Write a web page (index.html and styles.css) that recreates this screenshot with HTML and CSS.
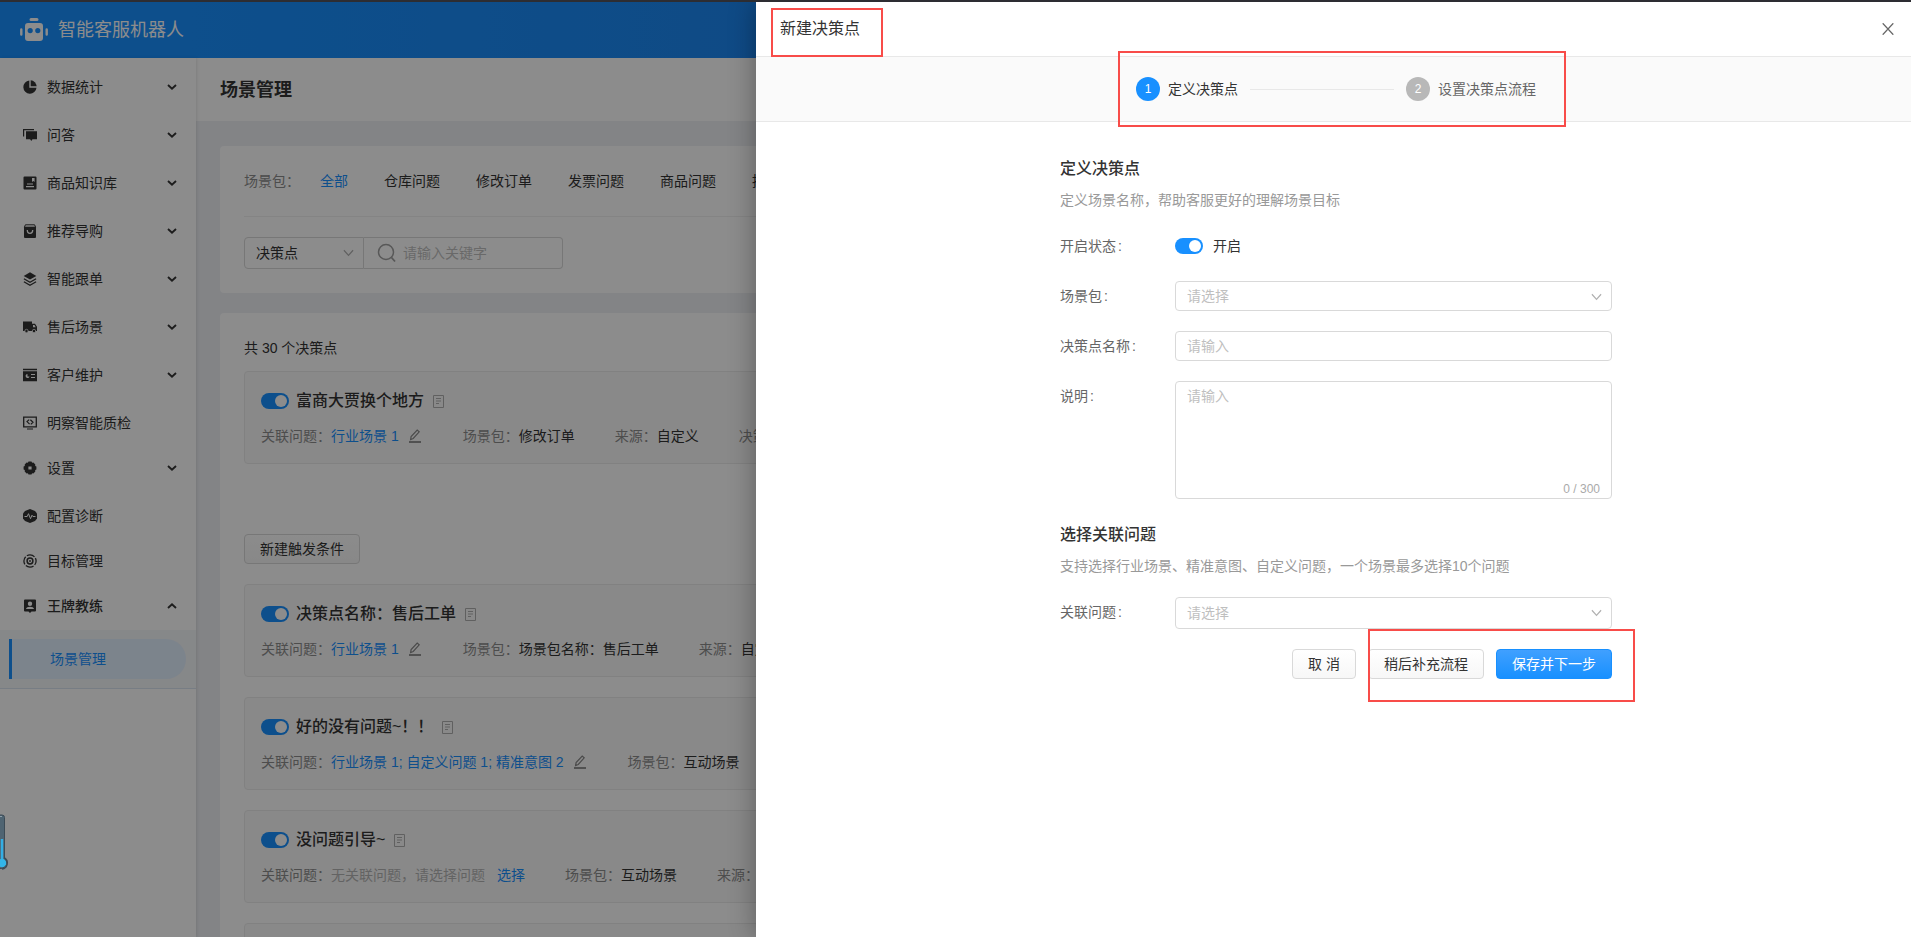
FILE: index.html
```html
<!DOCTYPE html>
<html lang="zh-CN">
<head>
<meta charset="utf-8">
<title>智能客服机器人</title>
<link rel="stylesheet" href="styles.css">
</head>
<body>
<svg class="defs" aria-hidden="true">
  <symbol id="down" viewBox="0 0 10 6"><path d="M1 1l4 3.6L9 1" fill="none" stroke="currentColor" stroke-width="1.9"/></symbol>
  <symbol id="thin-down" viewBox="0 0 12 8"><path d="M1 1l5 5.6L11 1" fill="none" stroke="currentColor" stroke-width="1.3"/></symbol>
  <symbol id="doc" viewBox="0 0 11 13"><path d="M.5.5h10v12H.5zM3 3.5h5M3 6h5M3 8.5h3" fill="none" stroke="currentColor"/></symbol>
  <symbol id="pen" viewBox="0 0 12 14"><path d="M1.600 10.600l.5-3L8.200 1l2 1.900-6 6.600z" fill="none" stroke="currentColor" stroke-width="1.200"/><path d="M0 13h12" stroke="currentColor" stroke-width="1.800"/></symbol>
</svg>
<div class="app">
  <header class="topbar">
    <svg class="logo" viewBox="0 0 28 24" aria-hidden="true"><path fill="currentColor" fill-rule="evenodd" d="M11 0h6a1 1 0 0 1 0 3h-6a1 1 0 0 1 0-3zM8 5h12a3 3 0 0 1 3 3v12a3 3 0 0 1-3 3H8a3 3 0 0 1-3-3V8a3 3 0 0 1 3-3zm2.200 5a2.600 2.600 0 1 0 0 5.200 2.600 2.600 0 0 0 0-5.200zm7.600 0a2.600 2.600 0 1 0 0 5.200 2.600 2.600 0 0 0 0-5.200z"/><path d="M1.300 11.500v5M26.700 11.500v5" stroke="currentColor" stroke-width="2.400" stroke-linecap="round"/></svg>
    <span class="brand">智能客服机器人</span>
  </header>
  <div class="body">
    <nav class="sidebar">
      <button class="item"><svg class="ico" viewBox="0 0 14 14"><path fill="currentColor" d="M6.300.5a6.600 6.600 0 1 0 7.200 7.200H6.300z"/><path fill="currentColor" d="M7.700.3A6.500 6.500 0 0 1 13.700 6.300h-6z"/></svg><span>数据统计</span><svg class="arrow"><use href="#down"/></svg></button>
      <button class="item"><svg class="ico" viewBox="0 0 14 14"><path d="M.6 8.500V1.600H11" fill="none" stroke="currentColor" stroke-width="1.200"/><path fill="currentColor" d="M3 3.200h11v8H9.500L8.300 13 7.100 11.200H3z"/></svg><span>问答</span><svg class="arrow"><use href="#down"/></svg></button>
      <button class="item"><svg class="ico" viewBox="0 0 14 14"><path fill="currentColor" fill-rule="evenodd" d="M1.500.5h11a1 1 0 0 1 1 1v11a1 1 0 0 1-1 1h-11a1 1 0 0 1-1-1v-11a1 1 0 0 1 1-1zM9 2v4l1.300-1L11.600 6V2zM4 7.500v1.100h6V7.500zM3 10v1.200h8V10z"/></svg><span>商品知识库</span><svg class="arrow"><use href="#down"/></svg></button>
      <button class="item"><svg class="ico" viewBox="0 0 14 14"><path d="M2.400.8h9.200l1 2.400H1.400z" fill="none" stroke="currentColor"/><path fill="currentColor" d="M1 3h12v10a1 1 0 0 1-1 1H2a1 1 0 0 1-1-1z"/><path d="M4.300 6c0 4.500 5.400 4.500 5.400 0" fill="none" stroke="#fff" stroke-width="1.300"/></svg><span>推荐导购</span><svg class="arrow"><use href="#down"/></svg></button>
      <button class="item"><svg class="ico" viewBox="0 0 14 14"><path fill="currentColor" d="M7 .3l6.300 3.600L7 7.500.7 3.900z"/><path d="M.9 6.800L7 10.200l6.100-3.400M.9 9.800L7 13.200l6.100-3.400" fill="none" stroke="currentColor" stroke-width="1.300"/></svg><span>智能跟单</span><svg class="arrow"><use href="#down"/></svg></button>
      <button class="item"><svg class="ico" viewBox="0 0 14 14"><path fill="currentColor" fill-rule="evenodd" d="M0 1.500h9v2.300h3l2 3V11H0zM10 5v2.200h2.700L11.500 5z"/><g fill="currentColor" stroke="#fff" stroke-width=".7"><circle cx="3.500" cy="11" r="1.700"/><circle cx="11" cy="11" r="1.700"/></g></svg><span>售后场景</span><svg class="arrow"><use href="#down"/></svg></button>
      <button class="item"><svg class="ico" viewBox="0 0 14 14"><path fill="currentColor" fill-rule="evenodd" d="M0 .7h14v1.600H0zM0 3.200h14v10H0zM8 6v1.100h4V6zM8 9v1.100h4V9z"/><path d="M4.500 6a2 2 0 1 0 2 2.500h-2z" fill="#fff"/></svg><span>客户维护</span><svg class="arrow"><use href="#down"/></svg></button>
      <button class="item leaf"><svg class="ico" viewBox="0 0 14 14"><path d="M.7 1.200h12.600v9.600H.7z" fill="none" stroke="currentColor" stroke-width="1.300"/><path d="M4 13h6M6.200 3.600L4 5.600l2.600 2.600M7.800 8.400L10 6.300 7.400 3.800" fill="none" stroke="currentColor" stroke-width="1.200"/></svg><span>明察智能质检</span></button>
      <button class="item"><svg class="ico" viewBox="0 0 14 14"><path fill="currentColor" fill-rule="evenodd" d="M5.500.5h3l.6 1.200 1.300-.1 1.900 1.900-.1 1.400 1.200.6v3l-1.200.6.1 1.400-1.900 1.900-1.300-.1-.6 1.200h-3l-.6-1.200-1.300.1-1.900-1.900.1-1.400L.6 8.500v-3l1.200-.6-.1-1.400 1.900-1.900 1.300.1zM5.400 5.400v3.200h3.200V5.400z"/></svg><span>设置</span><svg class="arrow"><use href="#down"/></svg></button>
      <button class="item leaf"><svg class="ico" viewBox="0 0 14 14"><path fill="currentColor" d="M7 0l5 2 2 2.500v5L12 12l-5 2-5-2-2-2.500v-5L2 2z"/><path d="M1.500 7.500h2.700l1.300-2.800 2 5L9 6.200l.9 1.300h2.600" fill="none" stroke="#fff"/></svg><span>配置诊断</span></button>
      <button class="item leaf"><svg class="ico" viewBox="0 0 14 14"><circle cx="7" cy="7" r="6.100" fill="none" stroke="currentColor" stroke-width="1.300" stroke-dasharray="8.200 1.380" stroke-dashoffset="4"/><circle cx="7" cy="7" r="2.900" fill="none" stroke="currentColor" stroke-width="1.500"/><circle cx="7" cy="7" r=".9" fill="currentColor"/></svg><span>目标管理</span></button>
      <button class="item open"><svg class="ico" viewBox="0 0 14 14"><path fill="currentColor" fill-rule="evenodd" d="M2 .5h10a1 1 0 0 1 1 1v10a1 1 0 0 1-1 1H8.500L7 14l-1.500-1.500H2a1 1 0 0 1-1-1v-10a1 1 0 0 1 1-1zm5 2a2.200 2.200 0 1 0 0 4.400 2.200 2.200 0 0 0 0-4.400zM3 10h8c-.3-3-7.700-3-8 0z"/></svg><span>王牌教练</span><svg class="arrow up"><use href="#down"/></svg></button>
      <div class="submenu"><a href="#" class="sub">场景管理</a></div>
    </nav>
    <main class="main">
      <div class="page-head"><h1>场景管理</h1></div>
      <section class="card filters">
        <div class="packs"><span class="muted pack-label">场景包：</span><div class="pack-list"><a href="#" class="link">全部</a><a href="#">仓库问题</a><a href="#">修改订单</a><a href="#">发票问题</a><a href="#">商品问题</a><a href="#">推荐问题</a></div></div>
        <div class="search">
          <div class="pick"><select aria-label="搜索类型"><option>决策点</option></select><svg class="caret"><use href="#thin-down"/></svg></div>
          <label class="keyword"><svg viewBox="0 0 20 20"><circle cx="9" cy="9" r="7.500" fill="none" stroke="currentColor" stroke-width="1.500"/><path d="M14.500 14.500l3.500 4" stroke="currentColor" stroke-width="1.800"/></svg><input type="text" placeholder="请输入关键字" aria-label="关键字"></label>
        </div>
      </section>
      <section class="card list">
        <p class="total">共 30 个决策点</p>
        <article class="point">
          <div class="point-title"><input type="checkbox" class="switch" checked aria-label="启用"><h2>富商大贾换个地方</h2><svg class="doc"><use href="#doc"/></svg></div>
          <div class="meta"><div><span class="muted">关联问题：</span><a href="#" class="link">行业场景 1</a><svg class="pen"><use href="#pen"/></svg></div><div><span class="muted">场景包：</span>修改订单</div><div><span class="muted">来源：</span>自定义</div><div><span class="muted">决策点</span></div></div>
        </article>
        <button class="btn new">新建触发条件</button>
        <article class="point">
          <div class="point-title"><input type="checkbox" class="switch" checked aria-label="启用"><h2>决策点名称：售后工单</h2><svg class="doc"><use href="#doc"/></svg></div>
          <div class="meta"><div><span class="muted">关联问题：</span><a href="#" class="link">行业场景 1</a><svg class="pen"><use href="#pen"/></svg></div><div><span class="muted">场景包：</span>场景包名称：售后工单</div><div><span class="muted">来源：</span>自定义</div></div>
        </article>
        <article class="point">
          <div class="point-title"><input type="checkbox" class="switch" checked aria-label="启用"><h2>好的没有问题~！！</h2><svg class="doc"><use href="#doc"/></svg></div>
          <div class="meta"><div><span class="muted">关联问题：</span><a href="#" class="link">行业场景 1; 自定义问题 1; 精准意图 2</a><svg class="pen"><use href="#pen"/></svg></div><div><span class="muted">场景包：</span>互动场景</div></div>
        </article>
        <article class="point">
          <div class="point-title"><input type="checkbox" class="switch" checked aria-label="启用"><h2>没问题引导~</h2><svg class="doc"><use href="#doc"/></svg></div>
          <div class="meta"><div><span class="muted">关联问题：</span><span class="faint">无关联问题，请选择问题</span><a href="#" class="link choose">选择</a></div><div><span class="muted">场景包：</span>互动场景</div><div><span class="muted">来源：</span>自定义</div></div>
        </article>
        <article class="point"></article>
      </section>
    </main>
  </div>
  <div class="mask"></div>
  <svg class="thermo" viewBox="0 0 9 56" aria-hidden="true"><path d="M-3 1h5a2.500 2.500 0 0 1 2.500 2.500V44A6 6 0 0 1 1 54.500h-4z" fill="#4f6472" stroke="#3c4b56"/><path d="M-2 2.500h4" stroke="#8fa0aa"/><path d="M2 25v22" stroke="#33aee5" stroke-width="2.400"/><circle cx="2" cy="49" r="4.300" fill="#33b5e8"/><path d="M4.500 44a6 6 0 0 1-2.500 11" fill="none" stroke="#3c4b56" stroke-width="1.500"/></svg>

  <aside class="drawer" role="dialog" aria-labelledby="drawer-title">
    <header class="drawer-head">
      <div class="marked mark-title"><h2 id="drawer-title">新建决策点</h2></div>
      <button class="close" aria-label="关闭"><svg viewBox="0 0 12 12"><path d="M.7.3l10.600 11.400M11.300.3L.7 11.700" stroke="currentColor" stroke-width="1.300"/></svg></button>
    </header>
    <div class="steps-bar">
      <div class="marked mark-steps">
        <ol class="steps"><li class="on"><b>1</b>定义决策点</li><li class="line"></li><li><b>2</b>设置决策点流程</li></ol>
      </div>
    </div>
    <div class="drawer-body">
      <form class="form">
        <h3>定义决策点</h3>
        <p class="hint">定义场景名称，帮助客服更好的理解场景目标</p>
        <div class="row"><label for="state">开启状态<i>:</i></label><div class="state"><input type="checkbox" class="switch" id="state" checked><span>开启</span></div></div>
        <div class="row"><label for="pack">场景包<i>:</i></label><div class="field"><select id="pack"><option>请选择</option></select><svg class="caret"><use href="#thin-down"/></svg></div></div>
        <div class="row"><label for="name">决策点名称<i>:</i></label><input id="name" type="text" placeholder="请输入"></div>
        <div class="row"><label for="desc">说明<i>:</i></label><div class="field"><textarea id="desc" placeholder="请输入"></textarea><span class="count">0 / 300</span></div></div>
        <h3 class="second">选择关联问题</h3>
        <p class="hint">支持选择行业场景、精准意图、自定义问题，一个场景最多选择10个问题</p>
        <div class="row"><label for="rel">关联问题<i>:</i></label><div class="field tall"><select id="rel"><option>请选择</option></select><svg class="caret"><use href="#thin-down"/></svg></div></div>
        <div class="actions"><button type="button" class="btn">取 消</button><div class="marked mark-actions"><button type="button" class="btn">稍后补充流程</button><button type="button" class="btn primary">保存并下一步</button></div></div>
      </form>
    </div>
  </aside>
</div>
</body>
</html>
```
FILE: styles.css
```css
* { box-sizing: border-box; }
body {
  margin: 0;
  font: 14px/22px "Liberation Sans", "Noto Sans CJK SC", sans-serif;
  color: #333;
}
h1, h2, h3, p, ol { margin: 0; padding: 0; }
a { color: inherit; text-decoration: none; }
button, input, select, textarea { font: inherit; color: inherit; margin: 0; }
.defs { display: none; }

.app {
  position: relative;
  height: 100vh;
  overflow: hidden;
  display: flex;
  flex-direction: column;
  border-top: 2px solid #2d2d32;
}
.mask { position: absolute; inset: 0; z-index: 2; background: rgba(0, 0, 0, .45); }

/* top bar */
.topbar {
  flex: none;
  height: 56px;
  display: flex;
  align-items: center;
  gap: 10px;
  padding: 0 20px;
  background: linear-gradient(90deg, #1890ff, #1890ff 10%, #2678dc);
  color: #fff;
}
.logo { width: 28px; height: 24px; }
.brand { font-size: 18px; line-height: 28px; }

.body { flex: 1; min-height: 0; display: flex; }

/* sidebar */
.sidebar {
  flex: none;
  width: 196px;
  padding-top: 5px;
  background: #fff;
  box-shadow: 1px 0 3px rgba(0, 0, 0, .1);
  z-index: 1;
}
.item {
  display: flex;
  align-items: center;
  gap: 10px;
  width: 100%;
  height: 48px;
  padding: 0 19px 0 23px;
  border: 0;
  background: none;
  text-align: left;
}
.item.leaf { height: 45px; padding-top: 3px; }
.item span { flex: 1; }
.item.open span { font-weight: 500; }
.ico { width: 14px; height: 14px; }
.arrow { width: 10px; height: 6px; }
.up { transform: rotate(180deg); }
.submenu {
  padding: 9px 10px 9px 9px;
  background: #f5f7fa;
  border-bottom: 1px solid #d9e4f0;
}
.sub {
  display: block;
  padding: 9px 0 9px 38px;
  border-left: 3px solid #1890ff;
  border-radius: 0 20px 20px 0;
  background: #e2f0ff;
  color: #1890ff;
}

/* page */
.main { flex: 1; min-width: 0; background: #eef0f4; }
.page-head { padding: 18px 24px 17px; background: #fff; }
.page-head h1 { font-size: 18px; line-height: 28px; }
.card { margin: 25px 24px 0; padding: 24px; border-radius: 4px; background: #fff; }
.list { margin-top: 20px; }
.muted { color: #8c8c8c; }
.faint { color: #b5b5b5; }
.link { color: #1890ff; }
.packs {
  display: flex;
  gap: 20px;
  padding-bottom: 24px;
  border-bottom: 1px solid #f0f0f0;
}
.pack-list { display: flex; gap: 36px; }
.search { display: flex; margin-top: 20px; }
.pick { position: relative; width: 120px; color: #333; }
.caret {
  position: absolute;
  right: 10px;
  top: 12px;
  width: 11px;
  height: 8px;
  color: #b0b0b0;
  pointer-events: none;
}
select {
  appearance: none;
  display: block;
  width: 100%;
  height: 32px;
  padding: 0 11px;
  border: 1px solid #d9d9d9;
  border-radius: 4px;
  background: #fff;
}
.pick select { border-radius: 4px 0 0 4px; }
.keyword {
  display: flex;
  align-items: center;
  gap: 6px;
  width: 199px;
  height: 32px;
  padding-left: 13px;
  border: 1px solid #d9d9d9;
  border-left: 0;
  border-radius: 0 4px 4px 0;
  color: #a0a0a0;
}
.keyword svg { width: 20px; height: 20px; flex: none; }
.keyword input { width: 100%; min-width: 0; padding: 0; border: 0; background: none; }
::placeholder { color: #bfbfbf; opacity: 1; }

.total { margin-bottom: 12px; }
.point {
  min-height: 93px;
  margin-bottom: 20px;
  padding: 17px 16px 15px;
  border: 1px solid #ebebeb;
  border-radius: 4px;
  background: #fafafa;
}
.point-title { display: flex; align-items: center; gap: 7px; height: 24px; }
.point-title h2 { font-size: 16px; line-height: 24px; font-weight: 500; }
.doc { width: 11px; height: 13px; margin-left: 2px; color: #b0b0b0; }
.meta { display: flex; gap: 40px; margin-top: 12px; white-space: nowrap; }
.meta > div { display: flex; align-items: center; }
.pen { width: 12px; height: 14px; margin: 0 2px 0 10px; color: #888; }
.choose { margin-left: 12px; }
.switch {
  appearance: none;
  flex: none;
  width: 28px;
  height: 16px;
  padding: 2px;
  border-radius: 8px;
  background: #1890ff;
}
.switch::before {
  content: "";
  display: block;
  width: 12px;
  height: 12px;
  margin-left: 12px;
  border-radius: 6px;
  background: #fff;
}
.btn {
  display: block;
  height: 30px;
  padding: 0 15px;
  border: 1px solid #d9d9d9;
  border-radius: 4px;
  background: linear-gradient(#fff, #f7f7f7);
  line-height: 20px;
}
.btn.new { margin: 70px 0 20px; }
.btn.primary { border-color: #1890ff; background: linear-gradient(#40a0ff, #1890ff); color: #fff; }

.thermo { position: absolute; z-index: 3; left: 0; bottom: 67px; width: 9px; height: 56px; }

/* drawer */
.drawer {
  position: absolute;
  z-index: 3;
  top: 0;
  right: 0;
  bottom: 0;
  left: 756px;
  display: flex;
  flex-direction: column;
  background: #fff;
  box-shadow: -2px 0 24px rgba(0, 0, 0, .3);
}
.drawer-head {
  display: flex;
  align-items: center;
  justify-content: space-between;
  height: 55px;
  padding: 0 11px 0 24px;
  border-bottom: 1px solid #e8e8e8;
}
.drawer-head h2 { font-size: 16px; line-height: 24px; font-weight: 400; }
.close { padding: 6px; border: 0; background: none; color: #666; }
.close svg { display: block; width: 12px; height: 12px; }
.steps-bar {
  display: flex;
  justify-content: center;
  padding: 20px 0 20px 5px;
  border-bottom: 1px solid #e8e8e8;
  background: #fafafa;
}
.steps { display: flex; gap: 12px; list-style: none; color: #666; }
.steps li { display: flex; align-items: center; gap: 8px; height: 24px; }
.steps .on { color: #333; }
.steps b {
  width: 24px;
  border-radius: 12px;
  background: #b8b8b8;
  color: #fff;
  font-size: 12px;
  font-weight: 400;
  line-height: 24px;
  text-align: center;
}
.steps .on b { background: #1890ff; }
.steps .line { width: 144px; height: 1px; align-self: center; background: #e8e8e8; }
.drawer-body { display: flex; justify-content: center; padding: 35px 0 0 5px; }
.form { width: 552px; }
.form h3 { font-size: 16px; line-height: 24px; font-weight: 500; }
.hint { margin: 8px 0 20px; color: #999; white-space: nowrap; }
.row {
  display: grid;
  grid-template-columns: 115px 1fr;
  margin-bottom: 20px;
}
.row label { line-height: 30px; color: #666; }
.row i { margin-left: 2px; font-style: normal; }
.state { display: flex; align-items: center; gap: 10px; }
.field { position: relative; }
.form select, .form input[type="text"], .form textarea {
  width: 100%;
  height: 30px;
  padding: 0 11px;
  border: 1px solid #d9d9d9;
  border-radius: 4px;
  color: #bfbfbf;
}
.form textarea { display: block; height: 118px; padding: 3px 11px; resize: none; }
.form .tall select { height: 32px; }
.count { position: absolute; right: 12px; bottom: 2px; font-size: 12px; line-height: 16px; color: #aaa; }
.form .second { margin-top: 24px; }
.actions { display: flex; justify-content: flex-end; gap: 12px; }
.mark-actions { display: flex; gap: 12px; }

/* highlight frames */
.marked { position: relative; }
.marked::after { content: ""; position: absolute; border: 2px solid #f84c49; pointer-events: none; }
.mark-title::after { inset: -9px -23px -16px -9px; }
.mark-steps::after { inset: -26px -30px -26px -18px; }
.mark-actions::after { inset: -20px -23px -23px 0; }
```
